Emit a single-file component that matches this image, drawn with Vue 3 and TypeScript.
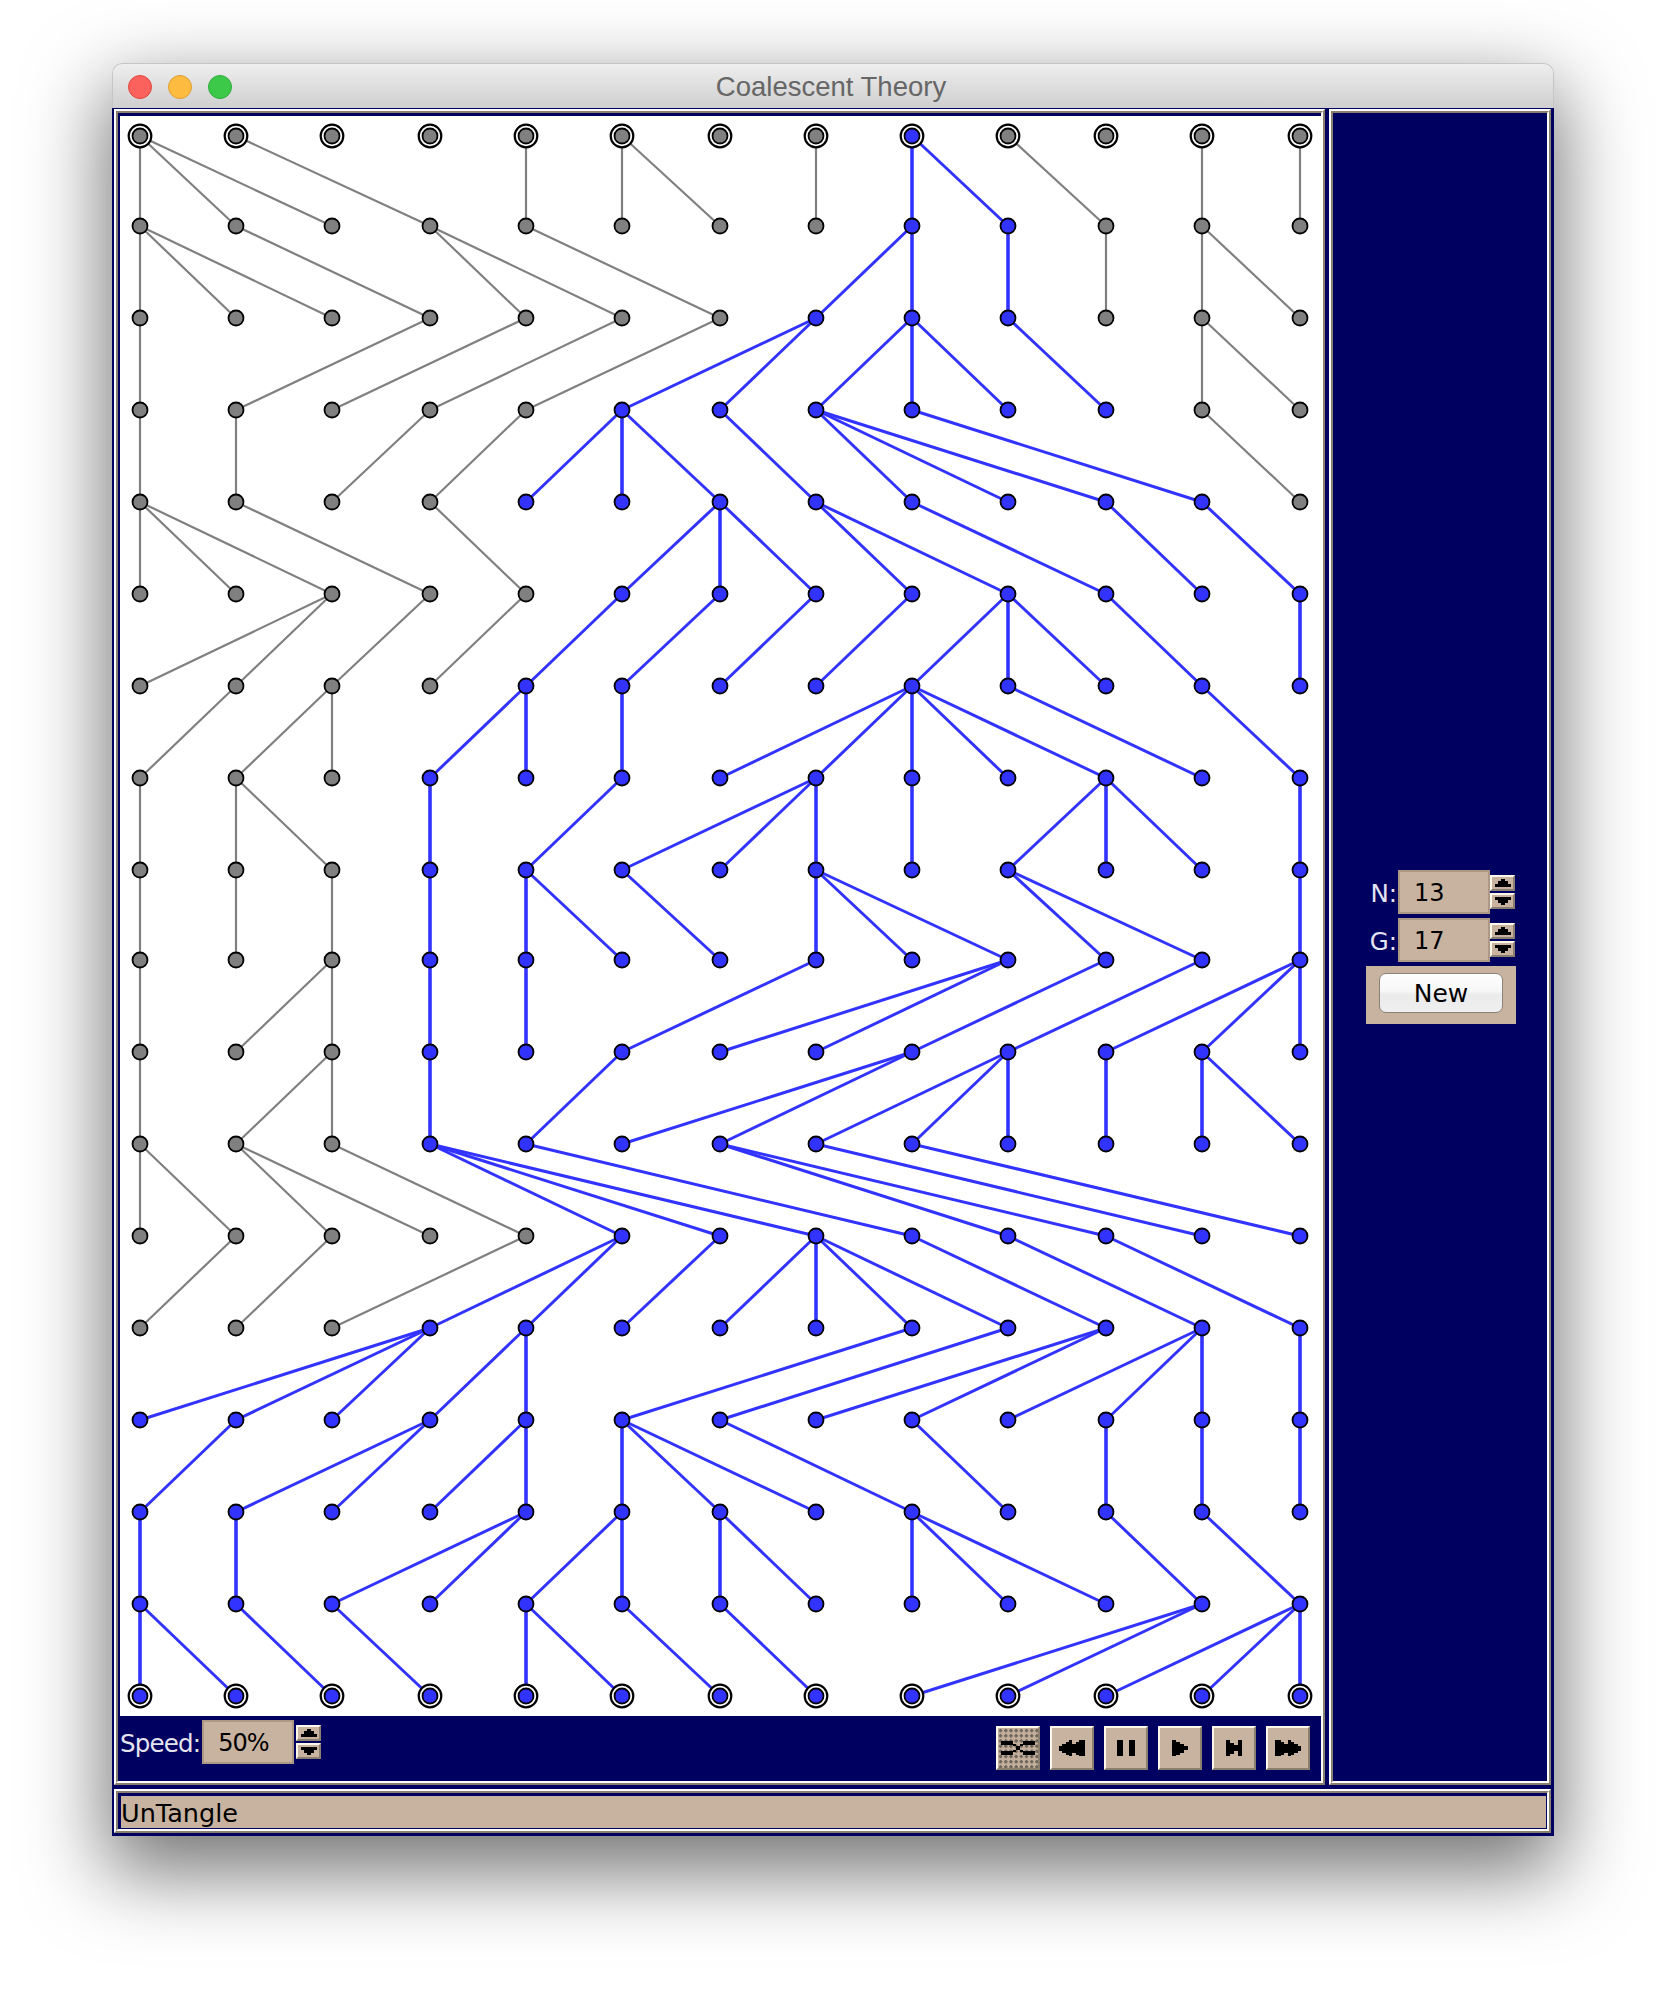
<script setup lang="ts">
const xs = [20, 116, 212, 310, 406, 502, 600, 696, 792, 888, 986, 1082, 1180]
const ys = [20, 110, 202, 294, 386, 478, 570, 662, 754, 844, 936, 1028, 1120, 1212, 1304, 1396, 1488, 1580]

// For each generation below the first: the parent column of each of the 13 individuals.
const parents: number[][] = [
  [0, 0, 0, 1, 4, 5, 5, 7, 8, 8, 9, 11, 12],
  [0, 0, 0, 1, 3, 3, 4, 8, 8, 9, 10, 11, 11],
  [0, 3, 4, 5, 6, 7, 7, 8, 8, 8, 9, 11, 11],
  [0, 1, 3, 4, 5, 5, 5, 6, 7, 7, 7, 8, 11],
  [0, 0, 0, 1, 3, 6, 6, 6, 7, 7, 8, 10, 11],
  [2, 2, 3, 4, 5, 6, 7, 8, 9, 9, 9, 10, 12],
  [1, 2, 2, 4, 4, 5, 8, 8, 8, 8, 8, 9, 11],
  [0, 1, 1, 3, 5, 7, 7, 7, 8, 10, 10, 10, 12],
  [0, 1, 2, 3, 4, 4, 5, 7, 7, 7, 9, 9, 12],
  [0, 2, 2, 3, 4, 7, 9, 9, 10, 11, 12, 12, 12],
  [0, 2, 2, 3, 5, 8, 8, 9, 9, 9, 10, 11, 11],
  [0, 0, 1, 1, 2, 3, 3, 3, 4, 6, 6, 7, 8],
  [1, 2, 4, 5, 5, 6, 7, 7, 7, 7, 8, 9, 10],
  [3, 3, 3, 4, 4, 8, 9, 10, 10, 11, 11, 11, 12],
  [1, 3, 3, 4, 4, 5, 5, 5, 6, 8, 10, 11, 12],
  [0, 1, 4, 4, 5, 5, 6, 6, 8, 8, 8, 10, 11],
  [0, 0, 1, 2, 4, 4, 5, 6, 11, 11, 12, 12, 12],
]

const rootColumn = 8
const blue: boolean[][] = [xs.map((_, c) => c === rootColumn)]
parents.forEach((row, r) => {
  blue.push(row.map((p) => blue[r][p]))
})

interface Edge { id: string; x1: number; y1: number; x2: number; y2: number; cls: string; on: boolean }
interface GraphNode { id: string; x: number; y: number; on: boolean; ring: boolean }

const edges: Edge[] = []
parents.forEach((row, r) => {
  row.forEach((p, c) => {
    const on = blue[r + 1][c]
    const cls = on ? (p === c ? 'edge-on vertical' : 'edge-on') : 'edge-off'
    edges.push({ id: `${r}-${c}`, x1: xs[p], y1: ys[r], x2: xs[c], y2: ys[r + 1], cls, on })
  })
})
edges.sort((a, b) => Number(a.on) - Number(b.on))

const nodes: GraphNode[] = []
ys.forEach((y, r) => {
  xs.forEach((x, c) => {
    nodes.push({ id: `${r}-${c}`, x, y, on: blue[r][c], ring: r === 0 || r === ys.length - 1 })
  })
})

// Pixel-stepped icon silhouettes: [from x, to x, height], centred on y = 8.
function steps(cols: number[][]): string {
  return cols.map(([a, b, h]) => `M${a} ${8 - h / 2}H${b}V${8 + h / 2}H${a}Z`).join('')
}
const rewindPath = steps([[0, 3, 5], [3, 7, 9], [7, 10, 13], [10, 13, 16], [13, 17, 9], [17, 20, 13], [20, 26, 16]])
const playPath = steps([[0, 4, 16], [4, 8, 13], [8, 12, 9], [12, 16, 4]])
const stepPath = steps([[0, 4, 16], [4, 8, 11], [8, 12, 6], [12, 16, 16]])
</script>

<template>
  <div class="page">
    <div class="window">
      <header class="titlebar">
        <div class="lights">
          <span class="light red"></span>
          <span class="light amber"></span>
          <span class="light green"></span>
        </div>
        <div class="title">Coalescent Theory</div>
      </header>

      <div class="frame">
        <div class="top-row">
          <section class="etched left-panel">
            <div class="etched-inner left-inner">
              <svg class="graph" width="1201" height="1600" viewBox="0 0 1201 1600">
                <line
                  v-for="e in edges"
                  :key="e.id"
                  :x1="e.x1"
                  :y1="e.y1"
                  :x2="e.x2"
                  :y2="e.y2"
                  :class="e.cls"
                />
                <g v-for="n in nodes" :key="n.id">
                  <circle v-if="n.ring" :cx="n.x" :cy="n.y" r="11.3" class="ring" />
                  <circle :cx="n.x" :cy="n.y" r="7.5" :class="n.on ? 'node-on' : 'node-off'" />
                </g>
              </svg>
              <div class="controls">
                <div class="speed">
                  <span class="label speed-label">Speed:</span>
                  <div class="field percent">50%</div>
                  <div class="spin">
                    <button class="spin-btn"><svg width="16" height="8" viewBox="0 0 16 8"><path d="M6 0H10V2H13V5H16V8H0V5H3V2H6Z" /></svg></button>
                    <button class="spin-btn"><svg width="16" height="8" viewBox="0 0 16 8"><path d="M0 0H16V3H13V6H10V8H6V6H3V3H0Z" /></svg></button>
                  </div>
                </div>
                <div class="transport">
                  <button class="tbtn disabled">
                    <svg width="34" height="14" viewBox="0 0 34 14" shape-rendering="crispEdges">
                      <path d="M0 0H12V4H0ZM22 0H34V4H22ZM0 10H12V14H0ZM22 10H34V14H22ZM12 3H15V5H12ZM19 3H22V5H19ZM15 5H19V9H15ZM12 9H15V11H12ZM19 9H22V11H19Z" />
                    </svg>
                  </button>
                  <button class="tbtn">
                    <svg width="26" height="16" viewBox="0 0 26 16" shape-rendering="crispEdges"><path :d="rewindPath" /></svg>
                  </button>
                  <button class="tbtn">
                    <svg width="18" height="16" viewBox="0 0 18 16" shape-rendering="crispEdges"><path d="M0 0H6V16H0ZM12 0H18V16H12Z" /></svg>
                  </button>
                  <button class="tbtn">
                    <svg width="16" height="16" viewBox="0 0 16 16" shape-rendering="crispEdges"><path :d="playPath" /></svg>
                  </button>
                  <button class="tbtn">
                    <svg width="16" height="16" viewBox="0 0 16 16" shape-rendering="crispEdges"><path :d="stepPath" /></svg>
                  </button>
                  <button class="tbtn">
                    <svg class="mirror" width="26" height="16" viewBox="0 0 26 16" shape-rendering="crispEdges"><path :d="rewindPath" /></svg>
                  </button>
                </div>
              </div>
            </div>
          </section>

          <section class="etched right-panel">
            <div class="etched-inner right-inner">
              <div class="settings">
                <div class="setting">
                  <span class="label">N:</span>
                  <div class="field">13</div>
                  <div class="spin">
                    <button class="spin-btn"><svg width="16" height="8" viewBox="0 0 16 8"><path d="M6 0H10V2H13V5H16V8H0V5H3V2H6Z" /></svg></button>
                    <button class="spin-btn"><svg width="16" height="8" viewBox="0 0 16 8"><path d="M0 0H16V3H13V6H10V8H6V6H3V3H0Z" /></svg></button>
                  </div>
                </div>
                <div class="setting">
                  <span class="label">G:</span>
                  <div class="field">17</div>
                  <div class="spin">
                    <button class="spin-btn"><svg width="16" height="8" viewBox="0 0 16 8"><path d="M6 0H10V2H13V5H16V8H0V5H3V2H6Z" /></svg></button>
                    <button class="spin-btn"><svg width="16" height="8" viewBox="0 0 16 8"><path d="M0 0H16V3H13V6H10V8H6V6H3V3H0Z" /></svg></button>
                  </div>
                </div>
                <div class="new-box">
                  <button class="new-btn">New</button>
                </div>
              </div>
            </div>
          </section>
        </div>

        <footer class="etched status">
          <div class="etched-inner status-inner">
            <div class="status-text">UnTangle</div>
          </div>
        </footer>
      </div>
    </div>
  </div>
</template>

<style>
html,
body {
  margin: 0;
  background: #fff;
}
</style>

<style scoped>
.page {
  box-sizing: border-box;
  width: 1666px;
  height: 1996px;
  padding: 63px 0 0 112px;
  background: #fff;
  overflow: hidden;
}
.window {
  width: 1442px;
  border-radius: 10px 10px 0 0;
  box-shadow: 0 30px 80px 6px rgba(0, 0, 0, 0.55);
}
.titlebar {
  box-sizing: border-box;
  height: 45px;
  display: grid;
  grid-template-columns: 1fr auto 1fr;
  align-items: center;
  padding: 0 15px;
  border: 1px solid #c6c6c6;
  border-bottom: none;
  border-radius: 10px 10px 0 0;
  background: linear-gradient(#eeeeee, #cfcfcf);
}
.lights {
  display: flex;
  gap: 16px;
  margin-top: 1px;
}
.light {
  box-sizing: border-box;
  width: 24px;
  height: 24px;
  border-radius: 50%;
  border: 1px solid;
}
.red { background: #fc625d; border-color: #e2483f; }
.amber { background: #fdbc40; border-color: #df9e35; }
.green { background: #3cc94a; border-color: #2eac3a; }
.title {
  font: 27.5px "Liberation Sans", Arial, sans-serif;
  color: #666;
  margin: 1px 4px 0 0;
}
.frame {
  box-sizing: border-box;
  height: 1728px;
  background: #000060;
  padding: 1px 3px 3px 2px;
  display: flex;
  flex-direction: column;
  gap: 4px;
}
.top-row {
  display: flex;
  gap: 4px;
}
.etched {
  box-sizing: border-box;
  border: 2px solid;
  border-color: #fff #8b7f6f #8b7f6f #fff;
}
.etched-inner {
  box-sizing: border-box;
  height: 100%;
  border: 2px solid;
  border-color: #8b7f6f #fff #fff #8b7f6f;
  background: #000060;
}
.left-panel {
  width: 1211px;
  height: 1676px;
}
.left-inner {
  padding: 3px 0 0 2px;
}
.graph {
  display: block;
  background: #fff;
}
.edge-off {
  stroke: #808080;
  stroke-width: 2.2;
}
.edge-on {
  stroke: #3333ff;
  stroke-width: 3;
}
.edge-on.vertical {
  stroke-width: 3.6;
}
.ring {
  fill: #fff;
  stroke: #000;
  stroke-width: 2.2;
}
.node-off,
.node-on {
  stroke: #000;
  stroke-width: 1.8;
}
.node-off { fill: #808080; }
.node-on { fill: #3333ff; }
.controls {
  display: flex;
  justify-content: space-between;
  padding: 4px 11px 0 0;
}
.speed {
  display: flex;
  align-items: flex-start;
  gap: 2px;
}
.label {
  font: 24.5px "DejaVu Sans", sans-serif;
  color: #e4e4f0;
  line-height: 47px;
}
.speed-label {
  letter-spacing: -0.8px;
}
.field {
  box-sizing: border-box;
  width: 92px;
  height: 44px;
  padding-left: 14px;
  background: #c8b3a0;
  border: 2px solid #ad9886;
  font: 24px/42px "DejaVu Sans", sans-serif;
  color: #000;
}
.percent {
  letter-spacing: -1px;
}
.spin {
  display: flex;
  flex-direction: column;
  gap: 2px;
  padding-top: 5px;
  width: 25px;
}
.spin-btn {
  box-sizing: border-box;
  display: flex;
  align-items: center;
  justify-content: center;
  width: 25px;
  height: 16px;
  padding: 0;
  background: #c8b3a0;
  border: 2px solid;
  border-color: #fff8ea #8b7f6f #8b7f6f #fff8ea;
}
.spin-btn svg {
  display: block;
  fill: #000;
}
.transport {
  display: flex;
  gap: 10px;
  padding-top: 6px;
}
.tbtn {
  box-sizing: border-box;
  display: flex;
  align-items: center;
  justify-content: center;
  width: 44px;
  height: 44px;
  padding: 0;
  background: #c8b3a0;
  border: 2px solid;
  border-color: #fff8ea #8b7f6f #8b7f6f #fff8ea;
}
.tbtn svg {
  display: block;
  fill: #000;
}
.mirror {
  transform: scaleX(-1);
}
.disabled {
  background-color: #c2ae9b;
  background-image: radial-gradient(circle, #6f675c 1.4px, transparent 1.7px);
  background-size: 5.2px 5.2px;
}
.right-panel {
  width: 222px;
  height: 1676px;
}
.right-inner {
  display: flex;
  align-items: center;
  justify-content: center;
}
.settings {
  width: 150px;
  display: flex;
  flex-direction: column;
  gap: 4px;
  margin-left: 2px;
}
.setting {
  display: flex;
  justify-content: flex-end;
  padding-right: 1px;
  height: 44px;
}
.setting .label {
  margin-right: 1px;
}
.new-box {
  box-sizing: border-box;
  height: 58px;
  padding: 7px 13px 11px;
  background: #c8b3a0;
}
.new-btn {
  box-sizing: border-box;
  display: block;
  width: 124px;
  height: 40px;
  padding: 0;
  border: 1px solid #8c8378;
  border-radius: 7px;
  background: linear-gradient(#ffffff 0%, #f6f6f6 45%, #ebebeb 55%, #efefef 100%);
  font: 25px "DejaVu Sans", sans-serif;
  color: #000;
}
.status {
  height: 44px;
}
.status-inner {
  padding: 3px 1px 1px 3px;
}
.status-text {
  height: 32px;
  background: #c8b3a0;
  font: 25.5px/34px "DejaVu Sans", sans-serif;
  color: #000;
}
</style>
